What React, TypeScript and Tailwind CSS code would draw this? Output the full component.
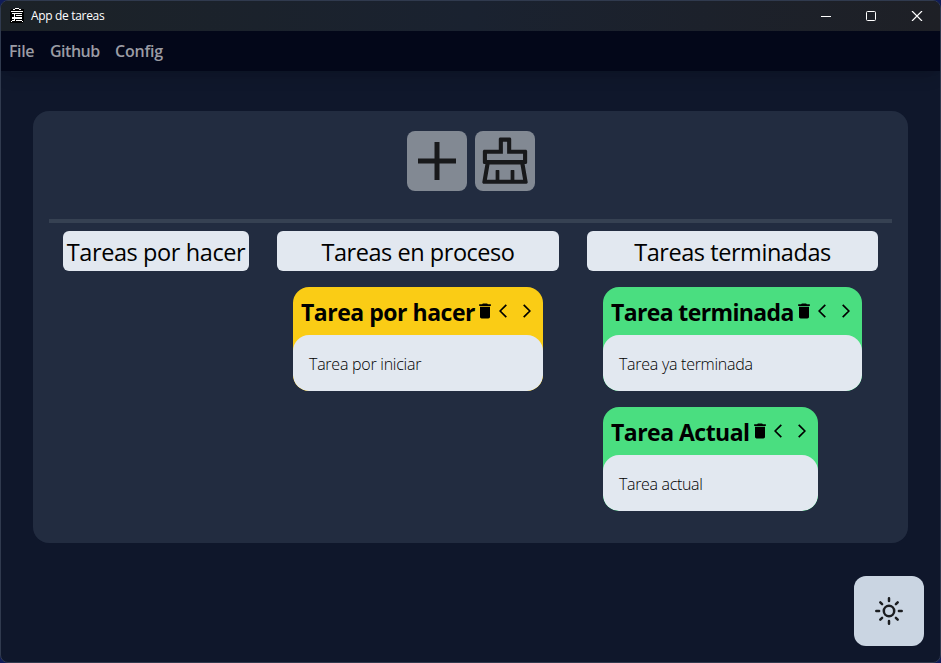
import React from "react";
import { AiOutlineClear } from "react-icons/ai";
import { MdDelete } from "react-icons/md";

function AppIcon() {
  return (
    <svg width="14" height="16" viewBox="0 0 14 16" shapeRendering="crispEdges">
      <rect x="0" y="1" width="14" height="14" rx="2" fill="#000" />
      <g fill="#fff">
        <rect x="5" y="0" width="4" height="1" />
        <rect x="3" y="1" width="2" height="1" />
        <rect x="9" y="1" width="2" height="1" />
        <rect x="1" y="3" width="12" height="1" />
        <rect x="2" y="5" width="10" height="1" />
        <rect x="4" y="5" width="1" height="8" />
        <rect x="6" y="7" width="6" height="1" />
        <rect x="2" y="9" width="10" height="2" />
        <rect x="2" y="12" width="2" height="1" />
        <rect x="6" y="12" width="6" height="1" />
        <rect x="1" y="13" width="1" height="1" />
        <rect x="12" y="13" width="1" height="1" />
      </g>
    </svg>
  );
}

function Chevron({ right = false }: { right?: boolean }) {
  return (
    <svg width="8" height="14" viewBox="0 0 8 14" fill="none" stroke="#000" strokeWidth="1.7">
      <path d={right ? "M.7 .8 6.9 7 .7 13.2" : "M7.3 .8 1.1 7l6.2 6.2"} />
    </svg>
  );
}

type CardProps = { title: string; text: string; width: string; color: string; titleClass: string; textClass: string };

function TaskCard({ title, text, width, color, titleClass, textClass }: CardProps) {
  return (
    <article className={`h-[104px] overflow-hidden rounded-2xl ${width} ${color}`}>
      <header className="flex h-12 pl-2">
        <h3 className={`shrink-0 whitespace-nowrap pt-[9px] text-[23px] leading-8 font-bold ${titleClass}`}>{title}</h3>
        <div className="flex h-12 items-center">
          <MdDelete size={20} />
          <div className="ml-1 flex gap-4">
            <Chevron />
            <Chevron right />
          </div>
        </div>
      </header>
      <div className="h-14 rounded-2xl bg-slate-200 px-4 pt-[17px]">
        <p className={`text-base leading-6 font-light whitespace-nowrap ${textClass}`}>{text}</p>
      </div>
    </article>
  );
}

function ColumnTitle({ children, spacing }: { children: React.ReactNode; spacing: string }) {
  return (
    <h2 className={`flex h-10 items-center justify-center rounded-md bg-slate-200 pt-1 text-[23.5px] whitespace-nowrap ${spacing}`}>
      {children}
    </h2>
  );
}

export default function App() {
  return (
    <div className="h-[663px] w-[941px] bg-[#101c58] font-['Open_Sans','Noto_Sans',sans-serif] text-black">
      <div className="flex h-full flex-col overflow-hidden rounded-lg border border-[#303a4e] bg-slate-900">
        <div className="flex h-[30px] shrink-0 items-center bg-gradient-to-r from-[#1c2227] via-[#1a2230] to-[#1e2026] pl-[9px] text-white">
          <AppIcon />
          <span className="ml-[7px] text-xs tracking-[-0.33px]">App de tareas</span>
          <div className="mr-[17px] ml-auto flex items-center gap-[35px]">
            <svg width="10" height="10" viewBox="0 0 10 10"><path d="M0 5.5h10" stroke="#fff" /></svg>
            <svg width="10" height="10" viewBox="0 0 10 10"><rect x=".5" y=".5" width="9" height="9" rx="1" fill="none" stroke="#fff" /></svg>
            <svg width="12" height="10" viewBox="0 0 12 10"><path d="m1 0 10 10m0-10-10 10" stroke="#fff" strokeWidth="1.2" /></svg>
          </div>
        </div>
        <nav className="flex h-10 shrink-0 items-center gap-4 bg-[#030719] pl-2 text-base font-semibold text-[#9b9ca4] shadow-lg">
          <span className="w-[25px] whitespace-nowrap tracking-[-0.4px]">File</span>
          <span className="w-[49px] whitespace-nowrap tracking-[-0.5px]">Github</span>
          <span className="whitespace-nowrap tracking-[-0.2px]">Config</span>
        </nav>
        <main className="flex grow flex-col">
          <section className="mt-10 ml-8 h-[432px] w-[875px] rounded-2xl bg-[#222c40] px-4 pt-5">
            <div className="flex justify-center gap-2">
              <button className="flex size-[60px] items-center justify-center rounded-lg bg-[#828993]">
                <svg width="38" height="38" viewBox="0 0 38 38" stroke="#18191b" strokeWidth="5"><path d="M19 0v38M0 19h38" /></svg>
              </button>
              <button className="flex size-[60px] items-center justify-center rounded-lg bg-[#828993] text-[#18191b]">
                <AiOutlineClear size={60} />
              </button>
            </div>
            <hr className="mt-7 h-1 border-0 bg-[#364152]" />
            <div className="mt-2 flex gap-7 px-[14px]">
              <div className="w-[186px]">
                <ColumnTitle spacing="tracking-[-0.4px]">Tareas por hacer</ColumnTitle>
              </div>
              <div className="w-[282px]">
                <ColumnTitle spacing="tracking-[-0.45px]">Tareas en proceso</ColumnTitle>
                <div className="px-4 pt-4">
                  <TaskCard title="Tarea por hacer" text="Tarea por iniciar" width="w-[250px]" color="bg-[#facc15]" titleClass="w-[174px] tracking-[-0.48px]" textClass="tracking-[-0.25px]" />
                </div>
              </div>
              <div className="w-[291px]">
                <ColumnTitle spacing="tracking-[-0.45px]">Tareas terminadas</ColumnTitle>
                <div className="flex flex-col gap-4 px-4 pt-4">
                  <TaskCard title="Tarea terminada" text="Tarea ya terminada" width="w-[259px]" color="bg-[#4ade80]" titleClass="w-[183px] tracking-[-0.63px]" textClass="tracking-[-0.27px]" />
                  <TaskCard title="Tarea Actual" text="Tarea actual" width="w-[215px]" color="bg-[#4ade80]" titleClass="w-[139px] tracking-[-0.52px]" textClass="tracking-[-0.33px]" />
                </div>
              </div>
            </div>
          </section>
          <button className="mt-[33px] mr-4 flex size-[70px] items-center justify-center self-end rounded-xl bg-slate-300">
            <svg width="28" height="28" viewBox="0 0 28 28" fill="none" stroke="#1b1d20" strokeWidth="2.5">
              <circle cx="14" cy="14" r="5.2" />
              <path strokeLinecap="round" d="M14 1.3v2.8M14 23.9v2.8M1.3 14h2.8M23.9 14h2.8M5.3 5.3l1.8 1.8M20.9 20.9l1.8 1.8M5.3 22.7l1.8-1.8M20.9 7.1l1.8-1.8" />
            </svg>
          </button>
        </main>
      </div>
    </div>
  );
}
